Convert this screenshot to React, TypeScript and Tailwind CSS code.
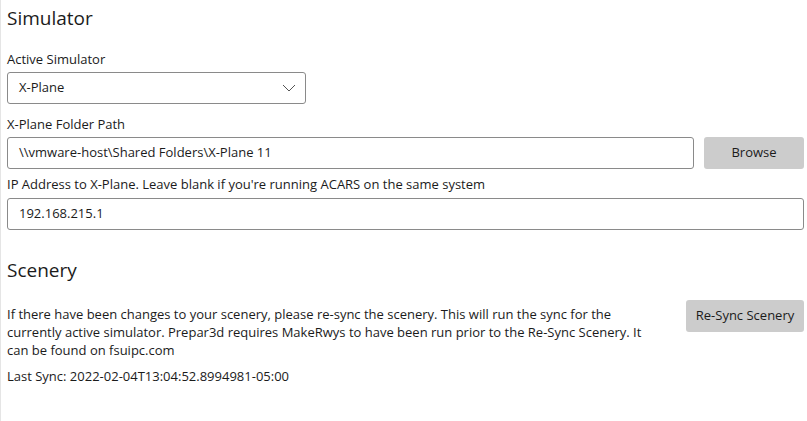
import React from 'react';

const font = "font-['Open_Sans','Noto_Sans',sans-serif]";

function Field({ value, className = '' }: { value: string; className?: string }) {
  return (
    <div
      className={`flex h-[32px] items-center rounded-[3px] border border-[#8a8a8a] bg-white pl-[11px] text-[13px] text-[#1b1b1b] ${className}`}
    >
      {value}
    </div>
  );
}

function GrayButton({ label, className = '' }: { label: string; className?: string }) {
  return (
    <button
      className={`flex h-[32px] items-center justify-center rounded-[3px] bg-[#cccccc] text-[13px] text-[#1b1b1b] ${className}`}
    >
      {label}
    </button>
  );
}

export default function App() {
  return (
    <div className={`h-[421px] w-[807px] border-l border-[#e5e5e5] bg-white pl-[6px] pr-[3px] text-[#1b1b1b] ${font}`}>
      {/* Simulator */}
      <h1 className="pt-[4px] text-[19px] leading-[28px] font-normal">Simulator</h1>

      <label className="mt-[18px] block text-[13px] leading-[18px]">Active Simulator</label>
      <div className="mt-[4px] flex h-[32px] w-[299px] items-center justify-between rounded-[3px] border border-[#8a8a8a] pl-[11px] pr-[9px] text-[13px]">
        <span>X-Plane</span>
        <svg width="14" height="8" viewBox="0 0 14 8" fill="none">
          <polyline points="1,1 7,7 13,1" stroke="#555" strokeWidth="1" />
        </svg>
      </div>

      <label className="mt-[11px] block text-[13px] leading-[18px]">X-Plane Folder Path</label>
      <div className="mt-[4px] flex gap-[10px]">
        <Field value="\\vmware-host\Shared Folders\X-Plane 11" className="flex-1" />
        <GrayButton label="Browse" className="w-[100px]" />
      </div>

      <label className="mt-[6px] block text-[13px] leading-[18px]">
        IP Address to X-Plane. Leave blank if you're running ACARS on the same system
      </label>
      <Field value="192.168.215.1" className="mt-[5px]" />

      {/* Scenery */}
      <h1 className="mt-[26px] text-[19px] leading-[28px] font-normal">Scenery</h1>

      <div className="mt-[16px] flex items-start justify-between">
        <p className="mt-[5px] w-[652px] text-[13px] leading-[18px]">
          If there have been changes to your scenery, please re-sync the scenery. This will run the sync for the
          currently active simulator. Prepar3d requires MakeRwys to have been run prior to the Re-Sync Scenery. It
          can be found on fsuipc.com
        </p>
        <GrayButton label="Re-Sync Scenery" className="w-[118px]" />
      </div>

      <p className="mt-[8px] text-[13px] leading-[18px]">Last Sync: 2022-02-04T13:04:52.8994981-05:00</p>
    </div>
  );
}
